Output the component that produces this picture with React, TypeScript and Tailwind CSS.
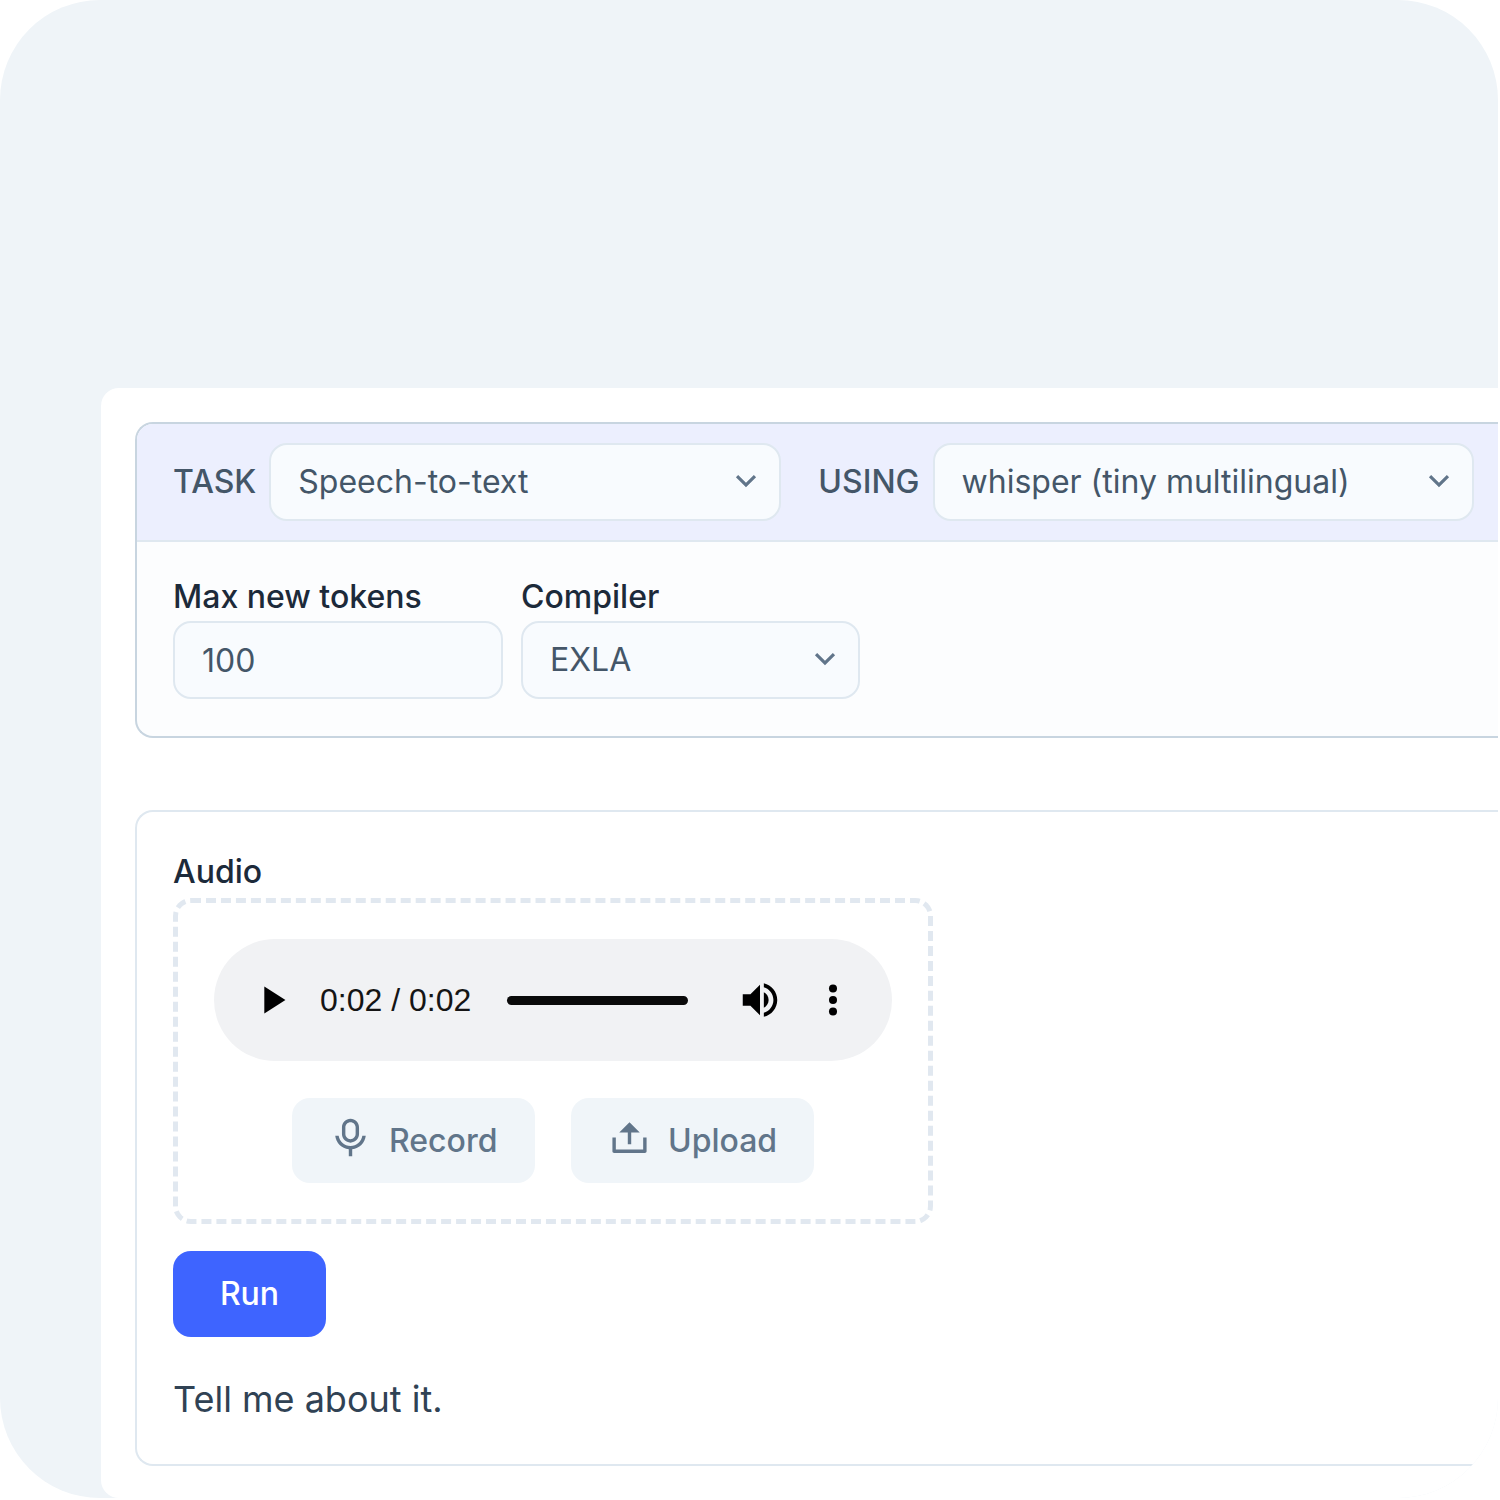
import React from "react";
import { RiArrowDownSLine, RiMicLine, RiUpload2Line } from "react-icons/ri";

const FIELD =
  "h-[78px] w-full appearance-none rounded-[18px] border-2 border-[#dfe8f0] bg-[#f8fbfe] px-[27px] text-[32px] leading-9 text-[#445668] outline-none";

function SelectField({ id, options, width }: { id: string; options: string[]; width: string }) {
  return (
    <div className={`relative shrink-0 ${width}`}>
      <select id={id} className={FIELD}>
        {options.map((option) => (
          <option key={option}>{option}</option>
        ))}
      </select>
      <RiArrowDownSLine
        aria-hidden="true"
        className="pointer-events-none absolute right-4 top-[19px] size-[38px] text-[#61758a]"
      />
    </div>
  );
}

function PlayIcon() {
  return (
    <svg viewBox="0 0 24 24" className="size-[46px]" fill="currentColor" aria-hidden="true">
      <path d="M8 5v14l11-7z" />
    </svg>
  );
}

function VolumeIcon() {
  return (
    <svg viewBox="0 0 24 24" className="size-[46px]" fill="currentColor" aria-hidden="true">
      <path d="M3 9v6h4l5 5V4L7 9H3zm13.5 3c0-1.77-1.02-3.29-2.5-4.03v8.05c1.48-.73 2.5-2.25 2.5-4.02zM14 3.23v2.06c2.89.86 5 3.54 5 6.71s-2.11 5.85-5 6.71v2.06c4.01-.91 7-4.49 7-8.77s-2.99-7.86-7-8.77z" />
    </svg>
  );
}

function MoreIcon() {
  return (
    <svg viewBox="0 0 24 24" className="size-[46px]" fill="currentColor" aria-hidden="true">
      <circle cx="12" cy="6" r="2.1" />
      <circle cx="12" cy="12" r="2.1" />
      <circle cx="12" cy="18" r="2.1" />
    </svg>
  );
}

function AudioPlayer() {
  return (
    <div className="flex h-[122px] w-[678px] items-center rounded-full bg-[#f1f2f4] px-[35px] text-black">
      <button type="button" aria-label="Play">
        <PlayIcon />
      </button>
      <span className="ml-[25px] whitespace-nowrap font-['Liberation_Sans',sans-serif] text-[32px] leading-9 text-[#151515]">
        0:02 / 0:02
      </span>
      <input
        type="range"
        aria-label="Seek"
        min={0}
        max={2}
        defaultValue={2}
        className="ml-9 mr-[49px] h-[9px] min-w-0 flex-1 appearance-none rounded-full bg-[#0a0a0a] [&::-webkit-slider-thumb]:size-0 [&::-webkit-slider-thumb]:appearance-none"
      />
      <button type="button" aria-label="Mute">
        <VolumeIcon />
      </button>
      <button type="button" aria-label="More options" className="ml-[27px] mr-px">
        <MoreIcon />
      </button>
    </div>
  );
}

function SoftButton({ icon, children }: { icon: React.ReactNode; children: React.ReactNode }) {
  return (
    <button
      type="button"
      className="flex h-[85px] w-[243px] items-center gap-[18px] rounded-[18px] bg-[#f0f5f9] pl-[38px] text-[32px] font-medium leading-9 text-[#61758a]"
    >
      {icon}
      {children}
    </button>
  );
}

export default function App() {
  return (
    <div className="bg-white font-['Inter',sans-serif]">
      <main className="mr-0.5 overflow-hidden rounded-[100px] bg-[#eff4f8] pl-[101px] pt-[388px]">
        <div className="rounded-l-[18px] bg-white pb-8 pl-[34px] pt-[34px]">
          <section className="overflow-hidden rounded-l-[18px] border-2 border-r-0 border-[#c8d5e0] bg-[#fcfdfe]">
            <div className="flex items-center border-b-2 border-[#dfe8f0] bg-[#eceffe] py-[19px] pl-9 text-[32px] leading-9">
              <label htmlFor="task" className="mr-[13px] font-medium text-[#445668]">
                TASK
              </label>
              <SelectField id="task" width="w-[512px]" options={["Speech-to-text"]} />
              <label htmlFor="model" className="ml-[37px] mr-[13px] font-medium text-[#445668]">
                USING
              </label>
              <SelectField id="model" width="w-[541px]" options={["whisper (tiny multilingual)"]} />
            </div>
            <div className="flex gap-[18px] py-[37px] pl-9">
              <div className="flex w-[330px] flex-col gap-1.5">
                <label htmlFor="tokens" className="text-[32px] font-medium leading-9 text-[#1c2a3a]">
                  Max new tokens
                </label>
                <input id="tokens" type="text" defaultValue="100" className={FIELD} />
              </div>
              <div className="flex w-[339px] flex-col gap-1.5">
                <label htmlFor="compiler" className="text-[32px] font-medium leading-9 text-[#1c2a3a]">
                  Compiler
                </label>
                <SelectField id="compiler" width="w-full" options={["EXLA"]} />
              </div>
            </div>
          </section>

          <section className="mt-[72px] rounded-l-[18px] border-2 border-r-0 border-[#dfe8f0] px-9 pb-[43px] pt-[42px]">
            <h2 className="text-[32px] font-medium leading-9 text-[#1c2a3a]">Audio</h2>
            <div className="mt-2 flex w-[760px] flex-col items-center gap-[37px] rounded-[18px] border-5 border-dashed border-[#e1e8f0] py-9">
              <AudioPlayer />
              <div className="flex gap-9">
                <SoftButton icon={<RiMicLine aria-hidden="true" className="mb-1.5 size-[41px]" />}>Record</SoftButton>
                <SoftButton icon={<RiUpload2Line aria-hidden="true" className="mb-1.5 size-[41px]" />}>Upload</SoftButton>
              </div>
            </div>
            <button
              type="button"
              className="mt-[27px] h-[86px] w-[153px] rounded-[18px] bg-[#3e64ff] text-[32px] font-medium leading-9 text-white"
            >
              Run
            </button>
            <p className="mt-10 text-[36px] leading-[44px] text-[#304254]">Tell me about it.</p>
          </section>
        </div>
      </main>
    </div>
  );
}
